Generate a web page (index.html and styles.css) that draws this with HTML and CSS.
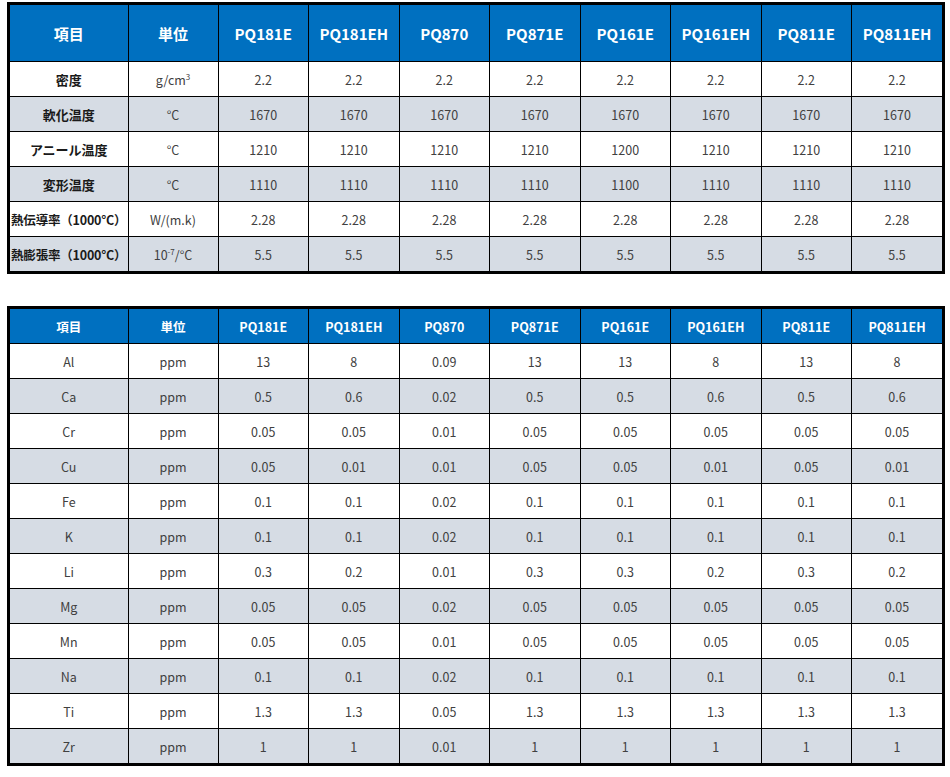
FILE: index.html
```html
<!DOCTYPE html>
<html lang="ja">
<head>
<meta charset="utf-8">
<link rel="stylesheet" href="styles.css">
</head>
<body>
<div class="frame frame-top">
<table class="spec spec-a">
<colgroup><col class="c-item"><col class="c-unit"><col><col><col><col><col><col><col><col></colgroup>
<thead>
<tr class="head"><th>項目</th><th>単位</th><th>PQ181E</th><th>PQ181EH</th><th>PQ870</th><th>PQ871E</th><th>PQ161E</th><th>PQ161EH</th><th>PQ811E</th><th>PQ811EH</th></tr>
</thead>
<tbody>
<tr><td class="name">密度</td><td>g/cm<sup>3</sup></td><td>2.2</td><td>2.2</td><td>2.2</td><td>2.2</td><td>2.2</td><td>2.2</td><td>2.2</td><td>2.2</td></tr>
<tr class="alt"><td class="name">軟化温度</td><td>°C</td><td>1670</td><td>1670</td><td>1670</td><td>1670</td><td>1670</td><td>1670</td><td>1670</td><td>1670</td></tr>
<tr><td class="name">アニール温度</td><td>°C</td><td>1210</td><td>1210</td><td>1210</td><td>1210</td><td>1200</td><td>1210</td><td>1210</td><td>1210</td></tr>
<tr class="alt"><td class="name">変形温度</td><td>°C</td><td>1110</td><td>1110</td><td>1110</td><td>1110</td><td>1100</td><td>1110</td><td>1110</td><td>1110</td></tr>
<tr><td class="name tight">熱伝導率（1000°C）</td><td>W/(m.k)</td><td>2.28</td><td>2.28</td><td>2.28</td><td>2.28</td><td>2.28</td><td>2.28</td><td>2.28</td><td>2.28</td></tr>
<tr class="alt"><td class="name tight">熱膨張率（1000°C）</td><td>10<sup>-7</sup>/°C</td><td>5.5</td><td>5.5</td><td>5.5</td><td>5.5</td><td>5.5</td><td>5.5</td><td>5.5</td><td>5.5</td></tr>
</tbody>
</table>
</div>

<div class="frame frame-bottom">
<table class="spec spec-b">
<colgroup><col class="c-item"><col class="c-unit"><col><col><col><col><col><col><col><col></colgroup>
<thead>
<tr class="head"><th>項目</th><th>単位</th><th>PQ181E</th><th>PQ181EH</th><th>PQ870</th><th>PQ871E</th><th>PQ161E</th><th>PQ161EH</th><th>PQ811E</th><th>PQ811EH</th></tr>
</thead>
<tbody>
<tr><td>Al</td><td>ppm</td><td>13</td><td>8</td><td>0.09</td><td>13</td><td>13</td><td>8</td><td>13</td><td>8</td></tr>
<tr class="alt"><td>Ca</td><td>ppm</td><td>0.5</td><td>0.6</td><td>0.02</td><td>0.5</td><td>0.5</td><td>0.6</td><td>0.5</td><td>0.6</td></tr>
<tr><td>Cr</td><td>ppm</td><td>0.05</td><td>0.05</td><td>0.01</td><td>0.05</td><td>0.05</td><td>0.05</td><td>0.05</td><td>0.05</td></tr>
<tr class="alt"><td>Cu</td><td>ppm</td><td>0.05</td><td>0.01</td><td>0.01</td><td>0.05</td><td>0.05</td><td>0.01</td><td>0.05</td><td>0.01</td></tr>
<tr><td>Fe</td><td>ppm</td><td>0.1</td><td>0.1</td><td>0.02</td><td>0.1</td><td>0.1</td><td>0.1</td><td>0.1</td><td>0.1</td></tr>
<tr class="alt"><td>K</td><td>ppm</td><td>0.1</td><td>0.1</td><td>0.02</td><td>0.1</td><td>0.1</td><td>0.1</td><td>0.1</td><td>0.1</td></tr>
<tr><td>Li</td><td>ppm</td><td>0.3</td><td>0.2</td><td>0.01</td><td>0.3</td><td>0.3</td><td>0.2</td><td>0.3</td><td>0.2</td></tr>
<tr class="alt"><td>Mg</td><td>ppm</td><td>0.05</td><td>0.05</td><td>0.02</td><td>0.05</td><td>0.05</td><td>0.05</td><td>0.05</td><td>0.05</td></tr>
<tr><td>Mn</td><td>ppm</td><td>0.05</td><td>0.05</td><td>0.01</td><td>0.05</td><td>0.05</td><td>0.05</td><td>0.05</td><td>0.05</td></tr>
<tr class="alt"><td>Na</td><td>ppm</td><td>0.1</td><td>0.1</td><td>0.02</td><td>0.1</td><td>0.1</td><td>0.1</td><td>0.1</td><td>0.1</td></tr>
<tr><td>Ti</td><td>ppm</td><td>1.3</td><td>1.3</td><td>0.05</td><td>1.3</td><td>1.3</td><td>1.3</td><td>1.3</td><td>1.3</td></tr>
<tr class="alt"><td>Zr</td><td>ppm</td><td>1</td><td>1</td><td>0.01</td><td>1</td><td>1</td><td>1</td><td>1</td><td>1</td></tr>
</tbody>
</table>
</div>
</body>
</html>
```

FILE: styles.css
```css
html, body {
  margin: 0;
  padding: 0;
  background: #ffffff;
}

body {
  padding: 2px 0 0 7px;
  font-family: "Noto Sans CJK JP", "Noto Sans", sans-serif;
  color: #404040;
}

.frame {
  width: 932px;
  border: 3px solid #000;
}

.frame-bottom {
  margin-top: 32px;
}

.spec {
  width: 932px;
  table-layout: fixed;
  border-collapse: collapse;
  border-style: hidden;
}

.c-item { width: 118px; }
.c-unit { width: 90px; }

.spec th,
.spec td {
  border: 1px solid #000;
  padding: 0;
  text-align: center;
  vertical-align: middle;
  white-space: nowrap;
  overflow: hidden;
}

.spec td {
  font-size: 12.5px;
  height: 34px;
}

.spec th {
  background: #0070c0;
  color: #ffffff;
  font-weight: 700;
}

.spec-a th {
  font-size: 15px;
  height: 56px;
}

.spec-b th {
  font-size: 12.5px;
  height: 34px;
}

.alt td {
  background: #d6dce4;
}

.name {
  font-weight: 700;
  color: #1a1a1a;
}

.spec td.name {
  font-size: 13px;
}

.spec td.tight {
  font-size: 12.5px;
  letter-spacing: -0.2px;
}

sup {
  font-size: 8px;
  line-height: 0;
  vertical-align: 5px;
}
```
